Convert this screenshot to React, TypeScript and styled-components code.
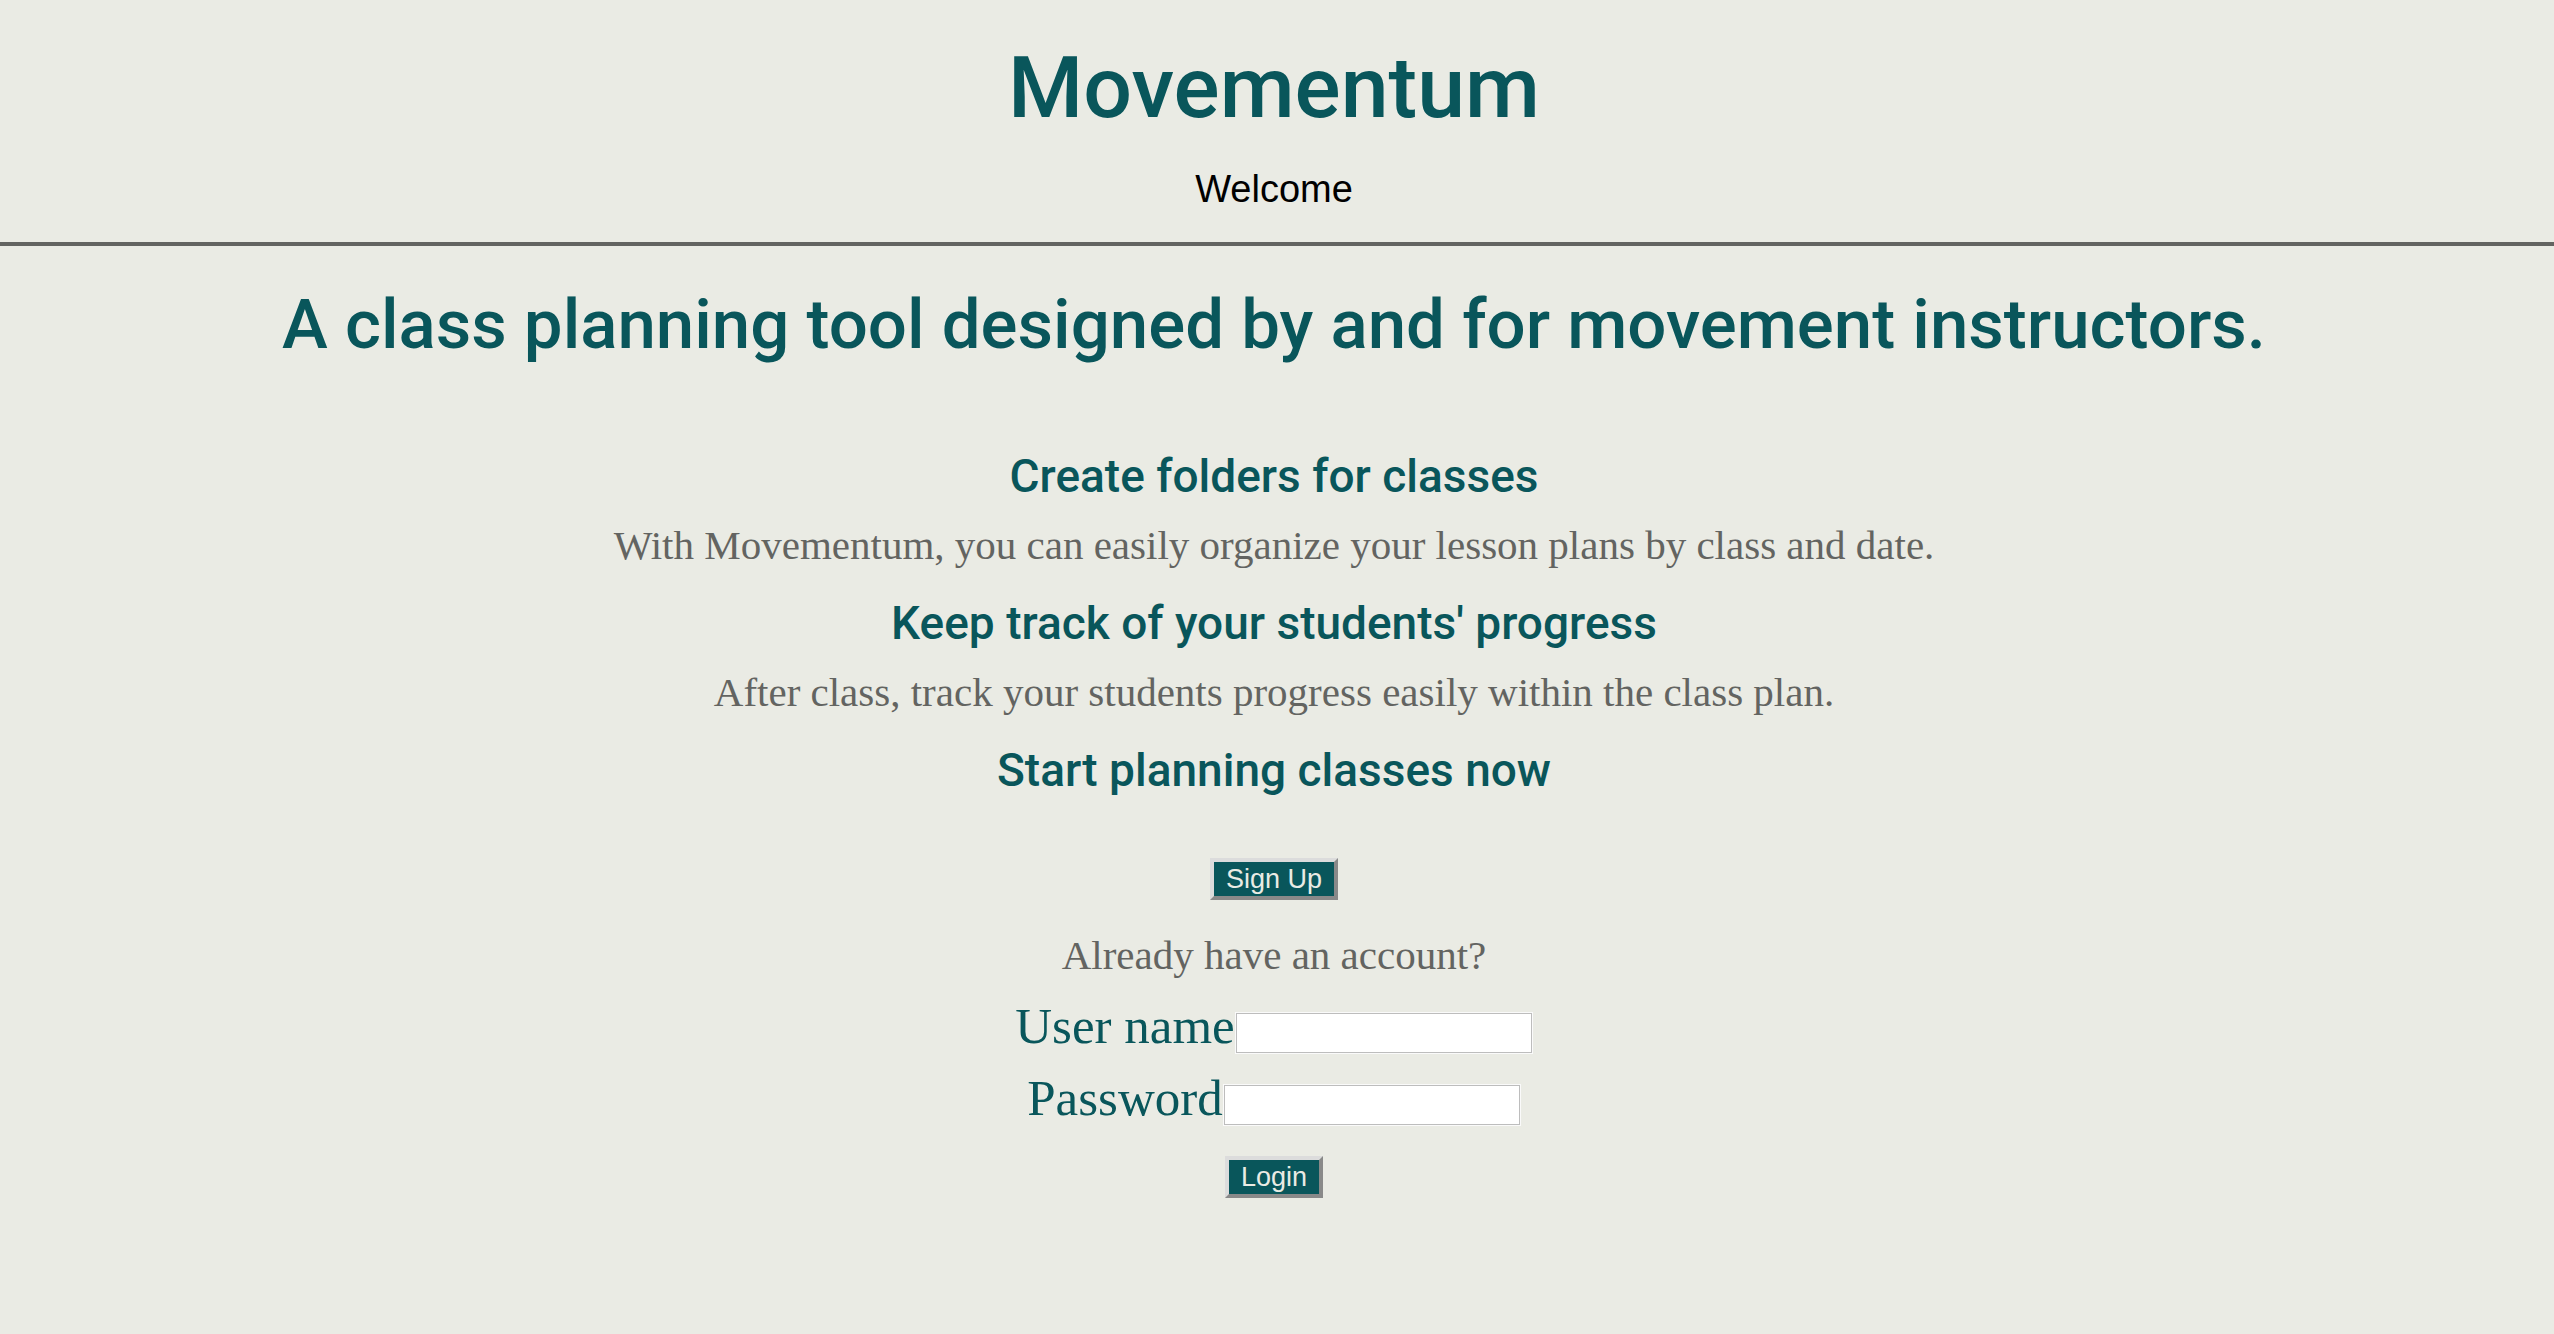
import React from 'react';
import styled, { createGlobalStyle } from 'styled-components';

const teal = '#09565b';
const grey = '#636461';
const paper = '#eaebe4';

const GlobalStyle = createGlobalStyle`
  body {
    margin: 0;
    background: ${paper};
  }
`;

const Page = styled.div`
  color: ${grey};
  font-family: "Liberation Serif", serif;
  font-size: 41px;
  line-height: 48px;
  text-align: center;
`;

const Header = styled.header`
  display: flex;
  flex-direction: column;
  align-items: center;
  gap: 29px;
  padding: 38px 6px 31px 0;
  border-bottom: 4px solid ${grey};
`;

const heading = `
  margin: 0;
  color: ${teal};
  font-family: Roboto, sans-serif;
  font-weight: 500;
`;

const Title = styled.h1`
  ${heading}
  font-size: 86px;
  line-height: 100px;
`;

const Welcome = styled.p`
  margin: 0;
  color: #000;
  font-family: "Liberation Sans", sans-serif;
  font-size: 38px;
  line-height: 44px;
`;

const Main = styled.main`
  display: flex;
  flex-direction: column;
  align-items: center;
  padding: 39px 6px 40px 0;
`;

const Tagline = styled.h2`
  ${heading}
  font-size: 69px;
  line-height: 80px;
`;

const Features = styled.div`
  display: flex;
  flex-direction: column;
  gap: 26px;
  margin: 83px 0 60px;
`;

const Feature = styled.section`
  display: flex;
  flex-direction: column;
  gap: 17px;
`;

const FeatureTitle = styled.h3`
  ${heading}
  font-size: 46px;
  line-height: 56px;
`;

const Text = styled.p`
  margin: 0;
`;

const Button = styled.button`
  height: 42px;
  padding: 0 12px;
  border: 4px solid;
  border-color: #dcdcdc #898989 #898989 #dcdcdc;
  border-radius: 0;
  background: ${teal};
  color: ${paper};
  font-family: "Liberation Sans", sans-serif;
  font-size: 27px;
  line-height: 32px;
  cursor: pointer;
`;

const LoginForm = styled.form`
  display: flex;
  flex-direction: column;
  align-items: center;
  gap: 17px;
  margin-top: 20px;
`;

const Field = styled.div`
  display: flex;
  align-items: flex-end;
`;

const Label = styled.label`
  color: ${teal};
  font-size: 51px;
  line-height: 55px;
`;

const Input = styled.input`
  box-sizing: border-box;
  width: 296px;
  height: 40px;
  margin: 1px;
  padding: 2px 6px;
  border: 1px solid #bdbdbd;
  outline: 1px solid #fafafa;
  background: #fff;
  font-family: "Liberation Sans", sans-serif;
  font-size: 27px;
`;

const Prompt = styled(Text)`
  margin-top: 31px;
`;

const Submit = styled(Button)`
  margin-top: 13px;
`;

const features = [
  {
    title: 'Create folders for classes',
    text: 'With Movementum, you can easily organize your lesson plans by class and date.',
  },
  {
    title: "Keep track of your students' progress",
    text: 'After class, track your students progress easily within the class plan.',
  },
  { title: 'Start planning classes now', text: '' },
];

export default function App() {
  return (
    <Page>
      <GlobalStyle />
      <Header>
        <Title>Movementum</Title>
        <Welcome>Welcome</Welcome>
      </Header>
      <Main>
        <Tagline>A class planning tool designed by and for movement instructors.</Tagline>
        <Features>
          {features.map(({ title, text }) => (
            <Feature key={title}>
              <FeatureTitle>{title}</FeatureTitle>
              {text && <Text>{text}</Text>}
            </Feature>
          ))}
        </Features>
        <Button type="button">Sign Up</Button>
        <Prompt>Already have an account?</Prompt>
        <LoginForm onSubmit={(event) => event.preventDefault()}>
          <Field>
            <Label htmlFor="username">User name</Label>
            <Input id="username" name="username" type="text" autoComplete="username" />
          </Field>
          <Field>
            <Label htmlFor="password">Password</Label>
            <Input id="password" name="password" type="password" autoComplete="current-password" />
          </Field>
          <Submit type="submit">Login</Submit>
        </LoginForm>
      </Main>
    </Page>
  );
}
